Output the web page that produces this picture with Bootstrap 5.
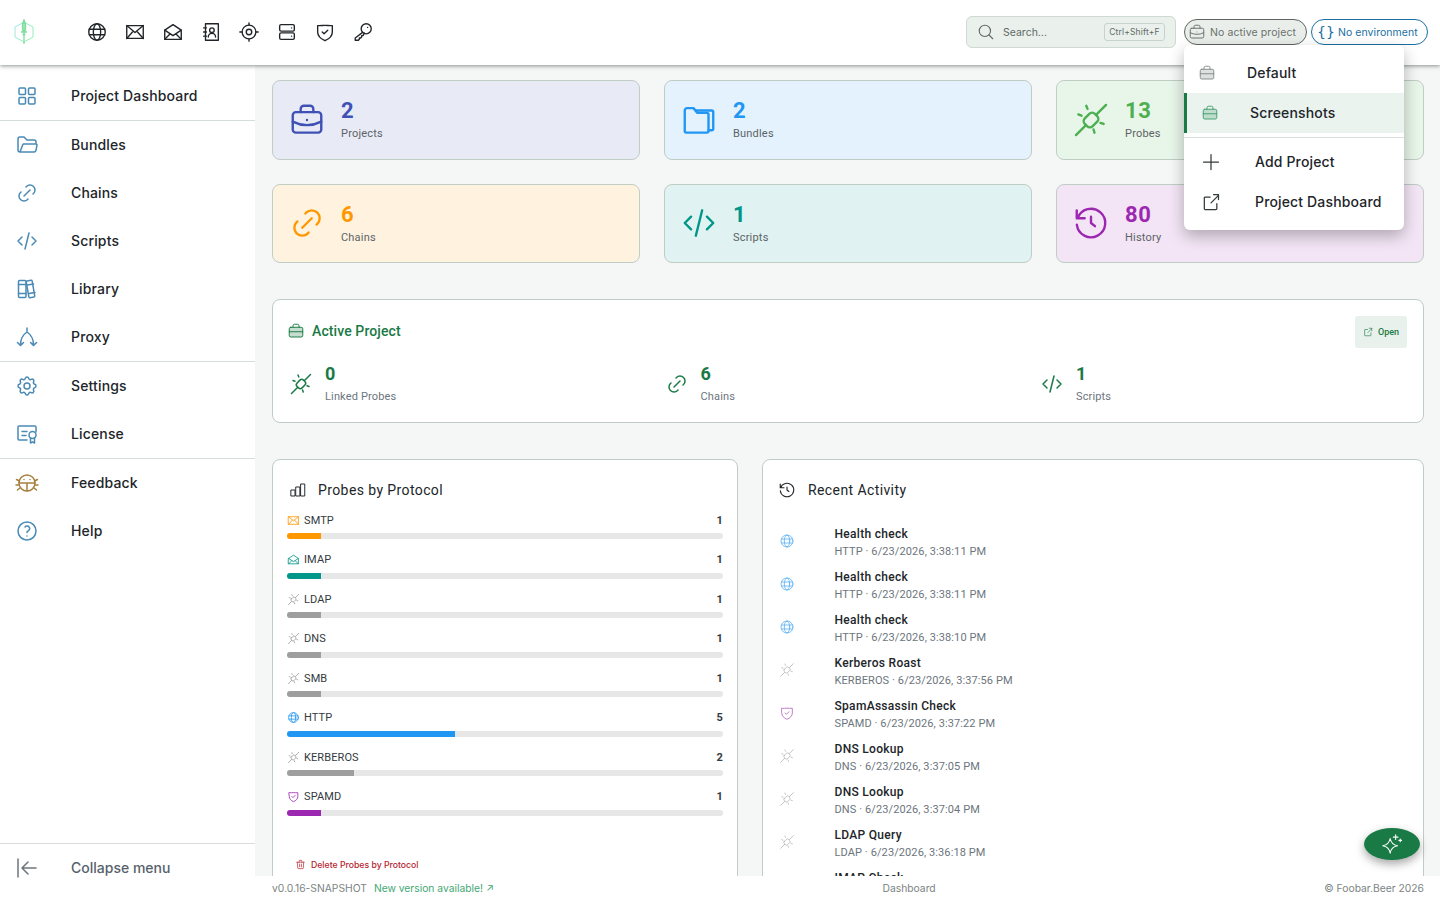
<!DOCTYPE html>
<html lang="en">
<head>
    <meta charset="UTF-8">
    <title>Project Dashboard</title>
    <link href="https://cdn.jsdelivr.net/npm/bootstrap@5.3.2/dist/css/bootstrap.min.css" rel="stylesheet">
    <style>
        body { height: 900px; overflow: hidden; background: #fff; font-family: Inter, "Liberation Sans", sans-serif; color: #212529; }
        svg.ico { fill: none; stroke: currentColor; stroke-width: 1.5; stroke-linecap: round; stroke-linejoin: round; flex: none; display: block; }

        .top-bar { height: 65px; background: #fff; box-shadow: 0 1px 4px rgba(40,60,50,.55); position: relative; z-index: 5; padding: 0 0 1px 14px; }
        .logo-box { width: 20px; }
        .top-icons { margin-left: 52px; gap: 16px; color: #212529; }
        .search-box { width: 210px; height: 32px; background: #eaf0ec; border: 1px solid #cfd9d3; border-radius: 6px; padding: 0 10px 0 10px; font: 10.5px Inter, sans-serif; color: #5f6b66; }
        .kbd-hint { margin-left: auto; border: 1px solid #c9d3cd; border-radius: 3px; font: 8.5px Inter, sans-serif; height: 18px; width: 61px; display: flex; align-items: center; justify-content: center; letter-spacing: .15px; }
        .chip-project, .chip-env { height: 26px; border-radius: 13px; font: 10.5px Inter, sans-serif; }
        .chip-project { width: 123px; background: #e9eeea; border: 1px solid #5f6662; color: #6a716d; padding-left: 3px; gap: 4px; margin-left: 8px; letter-spacing: .1px; }
        .chip-env { width: 117px; background: #fff; border: 1px solid #1a6fa3; color: #1a6fa3; padding-left: 5px; gap: 6px; margin-left: 4px; margin-right: 12px; letter-spacing: .05px; }
        .brace-mark { font: 14px "DejaVu Sans", sans-serif; width: 15px; display: flex; justify-content: space-between; }
        .project-wrap { position: relative; }
        .project-menu { position: absolute; top: 26px; left: 8px; width: 220px; height: 185px; margin: 0; padding: 8px 0; border: 0; border-radius: 6px; box-shadow: 0 6px 16px rgba(0,0,0,.28); display: block; z-index: 10; }
        .project-menu .dropdown-item { height: 40px; display: flex; align-items: center; padding: 0 0 2px; font-size: 14px; font-weight: 500; color: #212529; letter-spacing: .15px; }
        .project-menu svg { margin-top: 2px; }
        .item-plain { padding-left: 14px !important; gap: 31px; }
        .item-plain svg { color: #7d8784; stroke-width: 1.2; }
        .item-on { background: #eaf3ee !important; border-left: 3px solid #1a7a45; padding-left: 14px !important; gap: 31px; }
        .item-on svg { color: #3d9a68; stroke-width: 1.2; }
        .item-big { padding-left: 17px !important; gap: 34px; }
        .item-big svg { color: #343a38; }
        .menu-rule { height: 1px; background: #d9dfdc; margin: 4px 0; }

        .side-bar { width: 255px; height: 835px; background: #fff; padding-top: 7px; flex: none; }
        .side-item { height: 48px; padding: 0 0 2px 15px; gap: 32px; text-decoration: none; color: #212529; font-size: 14px; font-weight: 500; letter-spacing: .15px; }
        .side-item svg { color: #4a8ab5; margin-top: 2px; }
        .side-item .bug-ico { color: #a5803f; }
        .side-rule { height: 1px; background: #d5dcdc; }
        .side-foot { margin-top: auto; height: 57px; border-top: 1px solid #d9dcdc; }
        .side-foot .side-item { color: #56616b; letter-spacing: 0; }
        .side-foot svg { color: #6c757d; }

        .main-pane { height: 811px; overflow: hidden; background: #f5f7f6; padding: 15px 16px 0 17px; position: relative; }
        .tile-grid { display: grid; grid-template-columns: repeat(3, 368px); gap: 24px; }
        .tile { height: 79.5px; border: 1px solid #c0cdc5; border-radius: 8px; padding-left: 15px; gap: 15px; }
        .tile-num { font: 700 22px/1 Roboto, sans-serif; letter-spacing: .6px; }
        .tile-label { font: 11px/1 Roboto, sans-serif; color: #5c6366; letter-spacing: .2px; margin-top: 6px; }
        .tile-indigo { background: #e8eaf6; color: #3f51b5; }
        .tile-blue { background: #e3f2fd; color: #2196f3; }
        .tile-green { background: #e8f5e9; color: #4caf50; }
        .tile-orange { background: #fff3e0; color: #ff9800; }
        .tile-teal { background: #e0f2f1; color: #009688; }
        .tile-purple { background: #f3e5f5; color: #9c27b0; }

        .panel-box { background: #fff; border: 1px solid #c0cdc5; border-radius: 8px; }
        .active-box { height: 124px; margin-top: 36px; padding: 16px 16px 0; color: #1a7a45; }
        .active-title { font: 500 14px Roboto, sans-serif; gap: 7px; margin: 6px 0 0 -2px; letter-spacing: .1px; }
        .open-btn { width: 52px; height: 32px; background: #e8f1ec; border-radius: 3px; font: 500 9px Roboto, sans-serif; gap: 5px; color: #1a7a45; border: 0; padding: 0; }
        .active-stats { display: grid; grid-template-columns: repeat(3, 375.5px); margin-top: 17px; }
        .active-stat { gap: 12px; }
        .active-num { font: 700 18px/1 Roboto, sans-serif; letter-spacing: .5px; }
        .active-label { font: 11px/1 Roboto, sans-serif; color: #6c757d; letter-spacing: .15px; margin-top: 8px; }

        .lower-grid { display: grid; grid-template-columns: 466px 662px; gap: 24px; margin-top: 36px; }
        .lower-box { height: 500px; }
        .box-title { font: 14px Roboto, sans-serif; letter-spacing: .4px; color: #212529; }
        .proto-box { padding: 21px 14px 0; position: relative; }
        .proto-head { margin: 0 0 14px 2px; gap: 11px; }
        .proto-row { height: 39.5px; }
        .proto-line { font: 11px/13px Roboto, sans-serif; color: #343a40; height: 14px; gap: 4px; letter-spacing: .1px; }
        .proto-bar { height: 6px; background: #e7e7e7; border-radius: 3px; overflow: hidden; margin-top: 6px; }
        .proto-fill { height: 6px; }
        .delete-link { position: absolute; top: 399px; left: 22px; color: #b5232f; font: 500 8.7px Inter, sans-serif; gap: 5px; text-decoration: none; }
        .recent-box { padding: 21px 16px 0; }
        .recent-head { gap: 12px; margin-left: -1px; }
        .recent-list { margin-top: 22px; }
        .recent-row { height: 43px; gap: 40px; margin-left: -.5px; }
        .recent-row svg { margin-top: -4px; }
        .recent-title { font: 500 12px/16px Roboto, sans-serif; color: #212529; letter-spacing: .3px; }
        .recent-sub { font: 11px/16px Roboto, sans-serif; color: #6c757d; letter-spacing: .1px; margin-top: 2px; }
        .fab-ai { position: absolute; left: 1109px; top: 763px; width: 56px; height: 32px; border-radius: 50%; background: #1a7a45; color: #fff; box-shadow: 0 4px 10px rgba(0,0,0,.35); border: 0; padding: 0; }

        .foot-bar { height: 24px; background: #fff; padding: 0 16px 0 17px; font: 10.3px Inter, sans-serif; color: #7c8484; }
        .foot-new { color: #45a874; margin-left: 7px; }
    </style>
</head>
<body>

<!-- icon set -->
<svg width="0" height="0" class="position-absolute">
    <defs>
        <symbol id="i-globe" viewBox="0 0 24 24"><circle cx="12" cy="12" r="9"/><ellipse cx="12" cy="12" rx="4" ry="9"/><path d="M3.6 9h16.8M3.6 15h16.8"/></symbol>
        <symbol id="i-mail" viewBox="0 0 24 24"><rect x="3" y="5" width="18" height="14"/><path d="M3 5l9 7.5L21 5M3 19l7.2-8M21 19l-7.2-8"/></symbol>
        <symbol id="i-mail-open" viewBox="0 0 24 24"><path d="M3 10l9-6 9 6v10H3z"/><path d="M3 10l9 6 9-6M3 20l6-6M21 20l-6-6"/></symbol>
        <symbol id="i-contact" viewBox="0 0 24 24"><rect x="6" y="3" width="14" height="18"/><circle cx="13" cy="10" r="2.5"/><path d="M9 17.5c0-2.5 2-4 4-4s4 1.5 4 4M4 7.5h3M4 12h3M4 16.5h3"/></symbol>
        <symbol id="i-target" viewBox="0 0 24 24"><circle cx="12" cy="12" r="7.5"/><circle cx="12" cy="12" r="3"/><path d="M12 2v2.5M12 19.5V22M2 12h2.5M19.5 12H22"/></symbol>
        <symbol id="i-server" viewBox="0 0 24 24"><rect x="4" y="4" width="16" height="7" rx="1.5"/><rect x="4" y="13" width="16" height="7" rx="1.5"/><path d="M17 7.5h.01M17 16.5h.01"/></symbol>
        <symbol id="i-shield" viewBox="0 0 24 24"><path d="M4 5c3 .2 5.5-.2 8-.2s5 .4 8 .2v7c0 4.5-3.5 7.5-8 9.5-4.500-2-8-5-8-9.500z"/><path d="M9 12l2 2 4-4"/></symbol>
        <symbol id="i-key" viewBox="0 0 24 24"><circle cx="15.5" cy="8.5" r="5.5"/><path d="M11.6 12.4L3.5 18.5V21H7l1-1v-1.5h1.5l1-1V16H12l1.5-2.8M17 7h.01"/></symbol>
        <symbol id="i-search" viewBox="0 0 24 24"><circle cx="10.5" cy="10.5" r="7.5"/><path d="M16 16l5 5"/></symbol>
        <symbol id="i-brief" viewBox="0 0 24 24"><rect x="3" y="7" width="18" height="13" rx="2"/><path d="M8 7V5a2 2 0 0 1 2-2h4a2 2 0 0 1 2 2v2M12 12v.01M3 13a20 20 0 0 0 18 0"/></symbol>
        <symbol id="i-brief-duo" viewBox="0 0 24 24"><rect x="3" y="7" width="18" height="13" rx="2" fill="currentColor" fill-opacity=".25"/><path d="M8 7V5a2 2 0 0 1 2-2h4a2 2 0 0 1 2 2v2M3 13h18"/></symbol>
        <symbol id="i-plus" viewBox="0 0 24 24"><path d="M12 3v18M3 12h18"/></symbol>
        <symbol id="i-ext" viewBox="0 0 24 24"><path d="M11 6H5a1 1 0 0 0-1 1v13a1 1 0 0 0 1 1h13a1 1 0 0 0 1-1v-6M12 13l9-9M15 3h6v6"/></symbol>
        <symbol id="i-grid" viewBox="0 0 24 24"><rect x="4" y="4" width="6.5" height="6.5" rx="1"/><rect x="13.5" y="4" width="6.5" height="6.5" rx="1"/><rect x="4" y="13.5" width="6.5" height="6.5" rx="1"/><rect x="13.5" y="13.5" width="6.5" height="6.5" rx="1"/></symbol>
        <symbol id="i-folder-open" viewBox="0 0 24 24"><path d="M5 19l2.757-7.351A1 1 0 0 1 8.693 11H21a1 1 0 0 1 .986 1.164l-.996 5.211A2 2 0 0 1 19.026 19H5a2 2 0 0 1-2-2V6a2 2 0 0 1 2-2h4l3 3h7a2 2 0 0 1 2 2v2"/></symbol>
        <symbol id="i-folders" viewBox="0 0 24 24"><path d="M4 20a1 1 0 0 1-1-1V6a1.5 1.5 0 0 1 1.500-1.500H8.500L11 7.500h6a1 1 0 0 1 1 1V19a1 1 0 0 1-1 1z"/><path d="M10 6h10a1 1 0 0 1 1 1v10.500a1 1 0 0 1-1 1h-2"/></symbol>
        <symbol id="i-link" viewBox="0 0 24 24"><path d="M9 15l6-6M11 6l.463-.536a5 5 0 0 1 7.071 7.072L18 13M13 18l-.397.534a5.068 5.068 0 0 1-7.127 0 4.972 4.972 0 0 1 0-7.071L6 11"/></symbol>
        <symbol id="i-code" viewBox="0 0 24 24"><path d="M7 8l-4 4 4 4M17 8l4 4-4 4M14 4l-4 16"/></symbol>
        <symbol id="i-books" viewBox="0 0 24 24"><rect x="3.5" y="3.5" width="7.5" height="17" rx="1"/><rect x="12.5" y="3.5" width="6" height="17" rx="1" transform="rotate(-10 15.5 12)"/><path d="M3.5 7.5H11M3.5 16.5H11M12.500 8l6-1M14 16.500l6-1"/></symbol>
        <symbol id="i-proxy" viewBox="0 0 24 24"><path d="M12 3v4M12 7C9 9 5.5 12.5 5.5 20M12 7c3 2 6.5 5.5 6.5 13M2.500 17.500l3 3 3-3M15.500 17.500l3 3 3-3"/></symbol>
        <symbol id="i-gear" viewBox="0 0 24 24"><path d="M10.325 4.317c.426-1.756 2.924-1.756 3.35 0a1.724 1.724 0 0 0 2.573 1.066c1.543-.94 3.31.826 2.37 2.37a1.724 1.724 0 0 0 1.065 2.572c1.756.426 1.756 2.924 0 3.35a1.724 1.724 0 0 0-1.066 2.573c.94 1.543-.826 3.31-2.37 2.37a1.724 1.724 0 0 0-2.572 1.065c-.426 1.756-2.924 1.756-3.35 0a1.724 1.724 0 0 0-2.573-1.066c-1.543.94-3.31-.826-2.37-2.37a1.724 1.724 0 0 0-1.065-2.572c-1.756-.426-1.756-2.924 0-3.35a1.724 1.724 0 0 0 1.066-2.573c-.94-1.543.826-3.31 2.37-2.37 1 .608 2.296.07 2.572-1.065z"/><circle cx="12" cy="12" r="3"/></symbol>
        <symbol id="i-cert" viewBox="0 0 24 24"><path d="M12 18H4a1 1 0 0 1-1-1V5a1 1 0 0 1 1-1h16a1 1 0 0 1 1 1v5"/><path d="M7 9.5h5M7 13.5h4"/><circle cx="17.5" cy="13" r="3.5"/><path d="M15.5 16v5l2-1.2 2 1.2v-5"/></symbol>
        <symbol id="i-bug" viewBox="0 0 24 24"><circle cx="12" cy="12" r="8"/><path d="M4 12h16M12 12v8M1.5 8.5l3 1.5M22.5 8.5l-3 1.5M1 14h3M23 14h-3M2.5 19l3-2.5M21.5 19l-3-2.5M9 8.5h.01M15 8.5h.01"/></symbol>
        <symbol id="i-help" viewBox="0 0 24 24"><circle cx="12" cy="12" r="9"/><path d="M12 17v.01M12 13.5a1.5 1.5 0 0 1 1-1.5 2.6 2.6 0 1 0-3-4"/></symbol>
        <symbol id="i-collapse" viewBox="0 0 24 24"><path d="M3 3v18M21 12H7M13 6l-6 6 6 6"/></symbol>
        <symbol id="i-probe" viewBox="0 0 24 24"><rect x="7.5" y="8.5" width="9" height="7" rx="2.5" transform="rotate(-45 12 12)"/><path d="M2.5 21.5l6-6M15.5 8.5l6-6M9 3l.8 2M4 8.5l2 .8M14.2 20l-.6-2M20 14.5l-2-.7"/></symbol>
        <symbol id="i-history" viewBox="0 0 24 24"><path d="M3.06 13a9 9 0 1 0 .49-4.087M3 4v5h5M12 8v4l2.5 2"/></symbol>
        <symbol id="i-bars" viewBox="0 0 24 24"><rect x="3" y="12" width="5" height="8"/><rect x="9.5" y="8" width="5" height="12"/><rect x="16" y="4" width="5" height="16"/></symbol>
        <symbol id="i-trash" viewBox="0 0 24 24"><path d="M4 7h16M10 11v6M14 11v6M5 7l1 13a1 1 0 0 0 1 1h10a1 1 0 0 0 1-1l1-13M9 7V4a1 1 0 0 1 1-1h4a1 1 0 0 1 1 1v3"/></symbol>
        <symbol id="i-sparkle" viewBox="0 0 24 24"><path d="M10 6c.8 4.5 3 7 8 8-5 1-7.2 3.5-8 8-.8-4.5-3-7-8-8 5-1 7.2-3.5 8-8z"/><path d="M16 2v5M13.5 4.5h5M21 6.5v3M19.5 8h3"/></symbol>
        <linearGradient id="logoGrad" x1="0" y1="0" x2="1" y2="1"><stop offset="0" stop-color="#9be8f0"/><stop offset="1" stop-color="#8ef0a8"/></linearGradient>
    </defs>
</svg>

<header class="top-bar d-flex align-items-center">
    <div class="logo-box">
        <svg width="20" height="26" viewBox="0 0 20 26" fill="none">
            <path d="M10 3l9 5v10l-9 5-9-5V8z" stroke="url(#logoGrad)" stroke-width="1"/>
            <path d="M10 1v24M8.5 5L10 1l1.5 4v6L10 13l-1.5-2zM7 13h6M8.5 15.5h3" stroke="#7fdc9c" stroke-width="1.3"/>
        </svg>
    </div>
    <div class="top-icons d-flex">
        <svg class="ico" width="22" height="22"><use href="#i-globe"/></svg>
        <svg class="ico" width="22" height="22"><use href="#i-mail"/></svg>
        <svg class="ico" width="22" height="22"><use href="#i-mail-open"/></svg>
        <svg class="ico" width="22" height="22"><use href="#i-contact"/></svg>
        <svg class="ico" width="22" height="22"><use href="#i-target"/></svg>
        <svg class="ico" width="22" height="22"><use href="#i-server"/></svg>
        <svg class="ico" width="22" height="22"><use href="#i-shield"/></svg>
        <svg class="ico" width="22" height="22"><use href="#i-key"/></svg>
    </div>
    <div class="ms-auto d-flex align-items-center">
        <div class="search-box d-flex align-items-center gap-2">
            <svg class="ico" width="18" height="18"><use href="#i-search"/></svg>
            <span>Search...</span>
            <span class="kbd-hint">Ctrl+Shift+F</span>
        </div>
        <div class="project-wrap">
            <div class="chip-project d-flex align-items-center">
                <svg class="ico" width="18" height="18" style="stroke-width:1.3"><use href="#i-brief"/></svg>
                <span>No active project</span>
            </div>
            <div class="dropdown-menu project-menu">
                <a class="dropdown-item item-plain" href="#"><svg class="ico" width="18" height="18"><use href="#i-brief-duo"/></svg>Default</a>
                <a class="dropdown-item item-on" href="#"><svg class="ico" width="18" height="18"><use href="#i-brief-duo"/></svg>Screenshots</a>
                <div class="menu-rule"></div>
                <a class="dropdown-item item-big" href="#"><svg class="ico" width="20" height="20"><use href="#i-plus"/></svg>Add Project</a>
                <a class="dropdown-item item-big" href="#"><svg class="ico" width="20" height="20"><use href="#i-ext"/></svg>Project Dashboard</a>
            </div>
        </div>
        <div class="chip-env d-flex align-items-center">
            <span class="brace-mark"><span>{</span><span>}</span></span>
            <span>No environment</span>
        </div>
    </div>
</header>

<div class="d-flex">
    <nav class="side-bar d-flex flex-column" id="sideMenu"></nav>

    <div class="flex-grow-1" style="min-width:0">
        <main class="main-pane">
            <div class="tile-grid" id="tileGrid"></div>

            <section class="panel-box active-box">
                <div class="d-flex justify-content-between align-items-start">
                    <div class="active-title d-flex align-items-center">
                        <svg class="ico" width="18" height="18" style="stroke-width:1.3"><use href="#i-brief-duo"/></svg>
                        <span>Active Project</span>
                    </div>
                    <button class="open-btn d-flex align-items-center justify-content-center">
                        <svg class="ico" width="10" height="10"><use href="#i-ext"/></svg>Open
                    </button>
                </div>
                <div class="active-stats">
                    <div class="active-stat d-flex align-items-center">
                        <svg class="ico" width="24" height="24"><use href="#i-probe"/></svg>
                        <div><div class="active-num">0</div><div class="active-label">Linked Probes</div></div>
                    </div>
                    <div class="active-stat d-flex align-items-center">
                        <svg class="ico" width="24" height="24"><use href="#i-link"/></svg>
                        <div><div class="active-num">6</div><div class="active-label">Chains</div></div>
                    </div>
                    <div class="active-stat d-flex align-items-center">
                        <svg class="ico" width="24" height="24"><use href="#i-code"/></svg>
                        <div><div class="active-num">1</div><div class="active-label">Scripts</div></div>
                    </div>
                </div>
            </section>

            <div class="lower-grid">
                <section class="panel-box lower-box proto-box">
                    <div class="box-title proto-head d-flex align-items-center">
                        <svg class="ico" width="18" height="18" style="stroke-width:1.3"><use href="#i-bars"/></svg>
                        <span>Probes by Protocol</span>
                    </div>
                    <div id="protoList"></div>
                    <a class="delete-link d-flex align-items-center" href="#">
                        <svg class="ico" width="11" height="11"><use href="#i-trash"/></svg>Delete Probes by Protocol
                    </a>
                </section>
                <section class="panel-box lower-box recent-box">
                    <div class="box-title recent-head d-flex align-items-center">
                        <svg class="ico" width="18" height="18"><use href="#i-history"/></svg>
                        <span>Recent Activity</span>
                    </div>
                    <div class="recent-list" id="recentList"></div>
                </section>
            </div>

            <button class="fab-ai d-flex align-items-center justify-content-center">
                <svg class="ico" width="22" height="22" style="stroke-width:1.2"><use href="#i-sparkle"/></svg>
            </button>
        </main>
        <footer class="foot-bar d-flex justify-content-between align-items-center">
            <span>v0.0.16-SNAPSHOT<span class="foot-new">New version available! ↗</span></span>
            <span>Dashboard</span>
            <span>© Foobar.Beer 2026</span>
        </footer>
    </div>
</div>

<script src="https://cdn.jsdelivr.net/npm/bootstrap@5.3.2/dist/js/bootstrap.bundle.min.js"></script>
<script>
    const ico = (id, size, style = '') => `<svg class="ico" width="${size}" height="${size}" style="${style}"><use href="#${id}"/></svg>`;

    // sidebar
    const menu = [
        ['i-grid', 'Project Dashboard'], null,
        ['i-folder-open', 'Bundles'], ['i-link', 'Chains'], ['i-code', 'Scripts'], ['i-books', 'Library'], ['i-proxy', 'Proxy'], null,
        ['i-gear', 'Settings'], ['i-cert', 'License'], null,
        ['i-bug', 'Feedback', 'bug-ico'], ['i-help', 'Help']
    ];
    let sideHtml = '';
    menu.forEach(m => {
        if (!m) { sideHtml += '<div class="side-rule"></div>'; return; }
        sideHtml += `<a class="side-item d-flex align-items-center" href="#"><svg class="ico ${m[2] || ''}" width="24" height="24"><use href="#${m[0]}"/></svg>${m[1]}</a>`;
    });
    sideHtml += `<div class="side-foot"><a class="side-item d-flex align-items-center" href="#">${ico('i-collapse', 24)}Collapse menu</a></div>`;
    document.getElementById('sideMenu').innerHTML = sideHtml;

    // stat tiles
    const tiles = [
        ['tile-indigo', 'i-brief', '2', 'Projects'],
        ['tile-blue', 'i-folders', '2', 'Bundles'],
        ['tile-green', 'i-probe', '13', 'Probes'],
        ['tile-orange', 'i-link', '6', 'Chains'],
        ['tile-teal', 'i-code', '1', 'Scripts'],
        ['tile-purple', 'i-history', '80', 'History']
    ];
    document.getElementById('tileGrid').innerHTML = tiles.map(t => `
        <div class="tile ${t[0]} d-flex align-items-center">
            ${ico(t[1], 38)}
            <div><div class="tile-num">${t[2]}</div><div class="tile-label">${t[3]}</div></div>
        </div>`).join('');

    // protocol bars
    const kinds = {
        SMTP: ['i-mail', '#ff9800'], IMAP: ['i-mail-open', '#009688'], HTTP: ['i-globe', '#2196f3'],
        SPAMD: ['i-shield', '#9c27b0'], LDAP: ['i-probe', '#9e9e9e'], DNS: ['i-probe', '#9e9e9e'],
        SMB: ['i-probe', '#9e9e9e'], KERBEROS: ['i-probe', '#9e9e9e']
    };
    const protos = [['SMTP', 1], ['IMAP', 1], ['LDAP', 1], ['DNS', 1], ['SMB', 1], ['HTTP', 5], ['KERBEROS', 2], ['SPAMD', 1]];
    document.getElementById('protoList').innerHTML = protos.map(p => `
        <div class="proto-row">
            <div class="proto-line d-flex align-items-center">
                ${ico(kinds[p[0]][0], 13, `color:${kinds[p[0]][1]}`)}
                <span>${p[0]}</span><span class="ms-auto fw-bold">${p[1]}</span>
            </div>
            <div class="proto-bar"><div class="proto-fill" style="width:${(p[1] / 13 * 100).toFixed(2)}%;background:${kinds[p[0]][1]}"></div></div>
        </div>`).join('');

    // recent activity (last row runs under the footer, only its title shows)
    const recent = [
        ['Health check', 'HTTP', '3:38:11 PM'], ['Health check', 'HTTP', '3:38:11 PM'], ['Health check', 'HTTP', '3:38:10 PM'],
        ['Kerberos Roast', 'KERBEROS', '3:37:56 PM'], ['SpamAssassin Check', 'SPAMD', '3:37:22 PM'], ['DNS Lookup', 'DNS', '3:37:05 PM'],
        ['DNS Lookup', 'DNS', '3:37:04 PM'], ['LDAP Query', 'LDAP', '3:36:18 PM'], ['IMAP Check', 'IMAP', '']
    ];
    document.getElementById('recentList').innerHTML = recent.map(r => `
        <div class="recent-row d-flex align-items-center">
            ${ico(kinds[r[1]][0], 16, `color:${kinds[r[1]][1]};opacity:.75;stroke-width:1.2`)}
            <div><div class="recent-title">${r[0]}</div><div class="recent-sub">${r[2] ? `${r[1]} · 6/23/2026, ${r[2]}` : '&nbsp;'}</div></div>
        </div>`).join('');
</script>
</body>
</html>
